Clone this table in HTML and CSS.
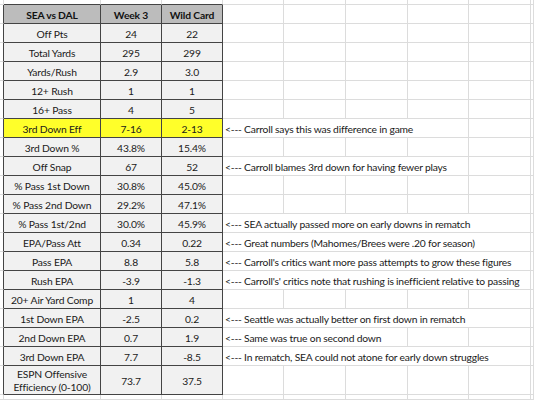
FILE: index.html
```html
<!DOCTYPE html>
<html>
<head>
<meta charset="utf-8">
<link rel="stylesheet" href="styles.css">
</head>
<body>
<div class="sheet">
  <!-- top partial row -->
  <div class="g"></div><div class="g top"></div><div class="g top"></div><div class="g top"></div><div class="g"></div><div class="g"></div><div class="g"></div><div class="g"></div><div class="g"></div><div class="g"></div>

  <div class="g edge"></div><div class="t hd">SEA vs DAL</div><div class="t hd">Week 3</div><div class="t hd">Wild Card</div><div class="g"></div><div class="g"></div><div class="g"></div><div class="g"></div><div class="g"></div><div class="g"></div>

  <div class="g edge"></div><div class="t">Off Pts</div><div class="t">24</div><div class="t">22</div><div class="g"></div><div class="g"></div><div class="g"></div><div class="g"></div><div class="g"></div><div class="g"></div>

  <div class="g edge"></div><div class="t">Total Yards</div><div class="t">295</div><div class="t">299</div><div class="g"></div><div class="g"></div><div class="g"></div><div class="g"></div><div class="g"></div><div class="g"></div>

  <div class="g edge"></div><div class="t">Yards/Rush</div><div class="t">2.9</div><div class="t">3.0</div><div class="g"></div><div class="g"></div><div class="g"></div><div class="g"></div><div class="g"></div><div class="g"></div>

  <div class="g edge"></div><div class="t">12+ Rush</div><div class="t">1</div><div class="t">1</div><div class="g"></div><div class="g"></div><div class="g"></div><div class="g"></div><div class="g"></div><div class="g"></div>

  <div class="g edge"></div><div class="t">16+ Pass</div><div class="t">4</div><div class="t">5</div><div class="g"></div><div class="g"></div><div class="g"></div><div class="g"></div><div class="g"></div><div class="g"></div>

  <div class="g edge"></div><div class="t hl">3rd Down Eff</div><div class="t hl">7-16</div><div class="t hl">2-13</div><div class="g note s4">&lt;--- Carroll says this was difference in game</div><div class="g"></div><div class="g"></div>

  <div class="g edge"></div><div class="t">3rd Down %</div><div class="t">43.8%</div><div class="t">15.4%</div><div class="g"></div><div class="g"></div><div class="g"></div><div class="g"></div><div class="g"></div><div class="g"></div>

  <div class="g edge"></div><div class="t">Off Snap</div><div class="t">67</div><div class="t">52</div><div class="g note s4">&lt;--- Carroll blames 3rd down for having fewer plays</div><div class="g"></div><div class="g"></div>

  <div class="g edge"></div><div class="t">% Pass 1st Down</div><div class="t">30.8%</div><div class="t">45.0%</div><div class="g"></div><div class="g"></div><div class="g"></div><div class="g"></div><div class="g"></div><div class="g"></div>

  <div class="g edge"></div><div class="t">% Pass 2nd Down</div><div class="t">29.2%</div><div class="t">47.1%</div><div class="g"></div><div class="g"></div><div class="g"></div><div class="g"></div><div class="g"></div><div class="g"></div>

  <div class="g edge"></div><div class="t">% Pass 1st/2nd</div><div class="t">30.0%</div><div class="t">45.9%</div><div class="g note s5">&lt;--- SEA actually passed more on early downs in rematch</div><div class="g"></div>

  <div class="g edge"></div><div class="t">EPA/Pass Att</div><div class="t">0.34</div><div class="t">0.22</div><div class="g note s5">&lt;--- Great numbers (Mahomes/Brees were .20 for season)</div><div class="g"></div>

  <div class="g edge"></div><div class="t">Pass EPA</div><div class="t">8.8</div><div class="t">5.8</div><div class="g note s5">&lt;--- Carroll's critics want more pass attempts to grow these figures</div><div class="g"></div>

  <div class="g edge"></div><div class="t">Rush EPA</div><div class="t">-3.9</div><div class="t">-1.3</div><div class="g note s5">&lt;--- Carroll's' critics note that rushing is inefficient relative to passing</div><div class="g"></div>

  <div class="g edge"></div><div class="t">20+ Air Yard Comp</div><div class="t">1</div><div class="t">4</div><div class="g"></div><div class="g"></div><div class="g"></div><div class="g"></div><div class="g"></div><div class="g"></div>

  <div class="g edge"></div><div class="t">1st Down EPA</div><div class="t">-2.5</div><div class="t">0.2</div><div class="g note s5">&lt;--- Seattle was actually better on first down in rematch</div><div class="g"></div>

  <div class="g edge"></div><div class="t">2nd Down EPA</div><div class="t">0.7</div><div class="t">1.9</div><div class="g note s3">&lt;--- Same was true on second down</div><div class="g"></div><div class="g"></div><div class="g"></div>

  <div class="g edge"></div><div class="t">3rd Down EPA</div><div class="t">7.7</div><div class="t">-8.5</div><div class="g note s5">&lt;--- In rematch, SEA could not atone for early down struggles</div><div class="g"></div>

  <div class="g edge"></div><div class="t two">ESPN Offensive<br>Efficiency (0-100)</div><div class="t">73.7</div><div class="t">37.5</div><div class="g"></div><div class="g"></div><div class="g"></div><div class="g"></div><div class="g"></div><div class="g"></div>

  <!-- bottom partial row -->
  <div class="g"></div><div class="g"></div><div class="g"></div><div class="g"></div><div class="g"></div><div class="g"></div><div class="g"></div><div class="g"></div><div class="g"></div><div class="g"></div>
</div>
</body>
</html>
```

FILE: styles.css
```css
html, body {
  margin: 0;
  padding: 0;
  background: #ffffff;
}

.sheet {
  width: 534px;
  height: 400px;
  overflow: hidden;
  display: grid;
  grid-template-columns: 4px 97px 61px 61px 61px 62px 62px 61px 62px 3px;
  grid-template-rows: 5px repeat(19, 19px) 29px 1fr;
  font-family: Lato, "Open Sans", sans-serif;
  font-size: 10.3px;
  letter-spacing: -0.15px;
  color: #1a1a1a;
}

.g,
.t {
  box-sizing: border-box;
  min-width: 0;
}

.g {
  border-right: 1px solid #dcdcdc;
  border-bottom: 1px solid #dcdcdc;
}

.g.top {
  border-bottom-color: #444444;
}

.g.edge {
  border-right-color: #444444;
}

.t {
  border-right: 1px solid #444444;
  border-bottom: 1px solid #444444;
  background: #f1f1f1;
  display: flex;
  align-items: center;
  justify-content: center;
  text-align: center;
  white-space: nowrap;
  padding-top: 1px;
}

.t.hd {
  background: #bcbcbc;
  font-weight: 700;
  color: #111111;
}

.t.hl {
  background: #ffff2a;
}

.t.two {
  line-height: 13px;
}

.note {
  display: flex;
  align-items: center;
  white-space: nowrap;
  overflow: visible;
  padding: 1px 0 0 2px;
  letter-spacing: -0.2px;
}

.s3 { grid-column: span 3; }
.s4 { grid-column: span 4; }
.s5 { grid-column: span 5; }
```
